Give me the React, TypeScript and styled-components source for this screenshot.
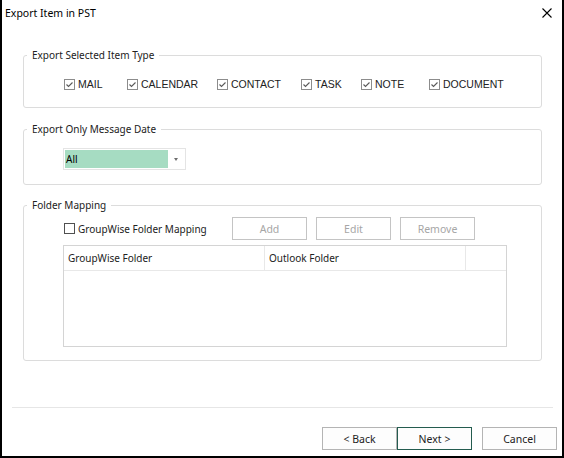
import styled, { createGlobalStyle } from 'styled-components'

const GlobalStyle = createGlobalStyle`
    html, body {
        margin: 0;
        padding: 0;
        background: #fff;
    }
    body {
        font-family: "Noto Sans", "Liberation Sans", sans-serif;
        color: #000;
    }
`

const Window = styled.div`
    width: 564px;
    height: 458px;
    box-sizing: border-box;
    border-left: 2px solid #000;
    border-right: 2px solid #000;
    border-bottom: 2px solid #000;
    background: #fff;
    display: flex;
    flex-direction: column;
`

const TitleBar = styled.div`
    height: 26px;
    display: flex;
    align-items: center;
    justify-content: space-between;
    padding: 0 10px 0 3px;
    font-size: 10.5px;
`

const CloseButton = styled.svg`
    width: 10px;
    height: 10px;
    display: block;
`

const Body = styled.div`
    flex: 1;
    display: flex;
    flex-direction: column;
    padding: 22px 20px 0 21px;
`

const Group = styled.fieldset<{ $h: number; $top?: number }>`
    margin: ${p => p.$top ?? 0}px 0 0;
    padding: 0;
    min-width: 0;
    height: ${p => p.$h}px;
    box-sizing: border-box;
    border: 1px solid #dcdcdc;
    border-radius: 3px;
`

const Legend = styled.legend`
    margin-left: 3px;
    padding: 0 5px;
    font-size: 10px;
    line-height: 14px;
    color: #222;
`

const GroupInner = styled.div<{ $pad: string }>`
    padding: ${p => p.$pad};
`

const TypeRow = styled.div`
    display: flex;
    align-items: center;
    height: 14px;
`

const CheckItem = styled.label<{ $w?: number }>`
    display: flex;
    align-items: center;
    gap: 3px;
    width: ${p => (p.$w ? `${p.$w}px` : 'auto')};
    font-family: "Liberation Sans", Arial, sans-serif;
    font-size: 10.5px;
    color: #222;
    white-space: nowrap;
`

const Box = styled.svg`
    width: 11px;
    height: 11px;
    display: block;
    flex: none;
`

const Combo = styled.div`
    width: 123px;
    height: 22px;
    box-sizing: border-box;
    border: 1px solid #e4e4e4;
    padding: 1px;
    display: flex;
    align-items: stretch;
`

const ComboValue = styled.div`
    width: 103px;
    background: #a6dcc2;
    font-size: 10px;
    line-height: 18px;
    padding-left: 1px;
    box-sizing: border-box;
`

const ComboArrow = styled.div`
    flex: 1;
    display: flex;
    align-items: center;
    justify-content: center;

    &::after {
        content: '';
        border-left: 2.5px solid transparent;
        border-right: 2.5px solid transparent;
        border-top: 3px solid #6e6e6e;
    }
`

const MapRow = styled.div`
    display: flex;
    align-items: center;
    gap: 9px;
    height: 23px;
`

const MapToggle = styled.label`
    width: 159px;
    display: flex;
    align-items: center;
    gap: 3px;
    padding-left: 1px;
    font-size: 10px;
    color: #222;
    white-space: nowrap;
`

const Button = styled.button<{ $primary?: boolean }>`
    width: 75px;
    height: 23px;
    box-sizing: border-box;
    margin: 0;
    padding: 0;
    background: #fdfdfd;
    border: 1px solid ${p => (p.$primary ? '#245c4f' : '#b4b4b4')};
    font-family: "Noto Sans", sans-serif;
    font-size: 10.5px;
    color: #222;

    &:disabled {
        background: #fff;
        border-color: #c4c4c4;
        color: #a6a6a6;
    }
`

const List = styled.div`
    margin-top: 5px;
    width: 444px;
    height: 102px;
    box-sizing: border-box;
    border: 1px solid #d4d4d4;
    background: #fff;
`

const HeaderRow = styled.div`
    display: flex;
    height: 25px;
    box-sizing: border-box;
    border-bottom: 1px solid #e8e8e8;
`

const HeaderCell = styled.div<{ $w?: number }>`
    width: ${p => (p.$w ? `${p.$w}px` : 'auto')};
    flex: ${p => (p.$w ? 'none' : 1)};
    box-sizing: border-box;
    border-right: ${p => (p.$w ? '1px solid #e8e8e8' : 'none')};
    padding-left: 4px;
    font-size: 10px;
    line-height: 24px;
    color: #222;
`

const Footer = styled.div`
    display: flex;
    flex-direction: column;
    padding-bottom: 6px;
`

const Separator = styled.div`
    height: 1px;
    margin: 0 9px 19px 10px;
    background: #e6e6e6;
`

const ButtonRow = styled.div`
    display: flex;
    justify-content: flex-end;
    padding-right: 5px;
`

const Spacer = styled.div`
    width: 10px;
`

const CheckBox = ({ checked }: { checked?: boolean }) => (
    <Box viewBox="0 0 11 11">
        <rect x="0.5" y="0.5" width="10" height="10" fill="#fff" stroke={checked ? '#8c8c8c' : '#505050'} />
        {checked && <polyline points="2.5,5.5 4.5,7.5 8.5,3.5" fill="none" stroke="#5a5a5a" strokeWidth="1.1" />}
    </Box>
)

const itemTypes = [
    { label: 'MAIL', w: 63 },
    { label: 'CALENDAR', w: 90 },
    { label: 'CONTACT', w: 84 },
    { label: 'TASK', w: 60 },
    { label: 'NOTE', w: 68 },
    { label: 'DOCUMENT' },
]

const App = () => {
    return (
        <>
            <GlobalStyle />
            <Window>
                <TitleBar>
                    <span>Export Item in PST</span>
                    <CloseButton viewBox="0 0 10 10">
                        <path d="M0.5 0.5 L9.5 9.5 M9.5 0.5 L0.5 9.5" stroke="#000" strokeWidth="1.1" />
                    </CloseButton>
                </TitleBar>

                <Body>
                    <Group $h={60}>
                        <Legend>Export Selected Item Type</Legend>
                        <GroupInner $pad="15px 0 0 40px">
                            <TypeRow>
                                {itemTypes.map(t => (
                                    <CheckItem key={t.label} $w={t.w}>
                                        <CheckBox checked />
                                        {t.label}
                                    </CheckItem>
                                ))}
                            </TypeRow>
                        </GroupInner>
                    </Group>

                    <Group $h={63} $top={14}>
                        <Legend>Export Only Message Date</Legend>
                        <GroupInner $pad="12px 0 0 39px">
                            <Combo>
                                <ComboValue>All</ComboValue>
                                <ComboArrow />
                            </Combo>
                        </GroupInner>
                    </Group>

                    <Group $h={163} $top={13}>
                        <Legend>Folder Mapping</Legend>
                        <GroupInner $pad="5px 0 0 39px">
                            <MapRow>
                                <MapToggle>
                                    <CheckBox />
                                    GroupWise Folder Mapping
                                </MapToggle>
                                <Button disabled>Add</Button>
                                <Button disabled>Edit</Button>
                                <Button disabled>Remove</Button>
                            </MapRow>
                            <List>
                                <HeaderRow>
                                    <HeaderCell $w={201}>GroupWise Folder</HeaderCell>
                                    <HeaderCell $w={201}>Outlook Folder</HeaderCell>
                                    <HeaderCell />
                                </HeaderRow>
                            </List>
                        </GroupInner>
                    </Group>
                </Body>

                <Footer>
                    <Separator />
                    <ButtonRow>
                        <Button>&lt; Back</Button>
                        <Button $primary>Next &gt;</Button>
                        <Spacer />
                        <Button>Cancel</Button>
                    </ButtonRow>
                </Footer>
            </Window>
        </>
    )
}

export default App
